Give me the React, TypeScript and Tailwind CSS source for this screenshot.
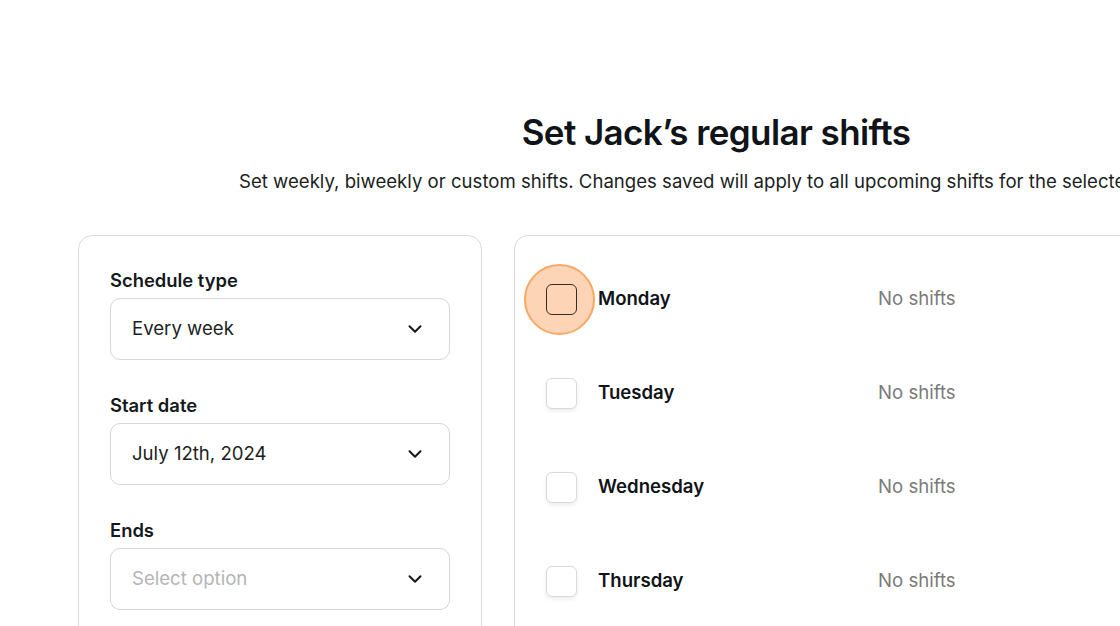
import { ChevronDown } from 'lucide-react'

const days = ['Monday', 'Tuesday', 'Wednesday', 'Thursday', 'Friday']

function SelectField({ label, value, placeholder }: { label: string; value?: string; placeholder?: string }) {
  return (
    <div className="flex flex-col gap-[6px]">
      <div className="text-[18.4px] leading-6 font-semibold text-[#15191c]">{label}</div>
      <div className="h-[62px] rounded-[10px] border border-[#d6d6d6] flex items-center justify-between pl-[21px] pr-[23px]">
        <span className={`text-[18.6px] ${value ? 'text-[#1b1f22]' : 'text-[#b5b5b5]'}`}>
          {value ?? placeholder}
        </span>
        <ChevronDown size={22} strokeWidth={2.2} className="text-[#15191c]" />
      </div>
    </div>
  )
}

export default function App() {
  return (
    <div
      className="w-[1120px] h-[626px] overflow-hidden bg-white text-[#15191c]"
      style={{ fontFamily: 'Inter, "Noto Sans", sans-serif' }}
    >
      <div className="w-[1276px] ml-[78px] pt-[110px]">
        {/* heading */}
        <h1 className="text-center text-[35px] leading-[44px] font-semibold tracking-[-0.6px] text-[#101418]">
          Set Jack’s regular shifts
        </h1>
        <p className="mt-[15px] pl-[161px] whitespace-nowrap text-[18.6px] leading-6 text-[#1b1f22]">
          Set weekly, biweekly or custom shifts. Changes saved will apply to all upcoming shifts for the selected period.
        </p>

        {/* cards */}
        <div className="mt-[42px] flex gap-8">
          <div className="w-[404px] shrink-0 h-[500px] rounded-[14px] border border-[#d9d9d9] px-[31px] pt-8 flex flex-col gap-[33px]">
            <SelectField label="Schedule type" value="Every week" />
            <SelectField label="Start date" value="July 12th, 2024" />
            <SelectField label="Ends" placeholder="Select option" />
          </div>

          <div className="flex-1 h-[500px] rounded-[14px] border border-[#d9d9d9] pl-[31px] pt-8 flex flex-col gap-8">
            {days.map((d, i) => (
              <div key={d} className="h-[62px] flex items-center shrink-0">
                <div className="relative w-[31px] h-[31px] shrink-0">
                  {i === 0 && (
                    <div className="absolute left-[-22px] top-[-20px] w-[71px] h-[71px] rounded-full bg-[#fdd5b6] border-2 border-[#f8a862]" />
                  )}
                  <div
                    className={`relative w-[31px] h-[31px] rounded-[6px] border ${
                      i === 0
                        ? 'border-[#3a2b22] bg-transparent'
                        : 'border-[#dadada] bg-white shadow-[0_2px_4px_rgba(0,0,0,0.08)]'
                    }`}
                  />
                </div>
                <div className="ml-[21px] w-[280px] text-[18.6px] font-semibold text-[#101418]">{d}</div>
                <div className="text-[18.6px] text-[#7a7a7a]">No shifts</div>
              </div>
            ))}
          </div>
        </div>
      </div>
    </div>
  )
}
